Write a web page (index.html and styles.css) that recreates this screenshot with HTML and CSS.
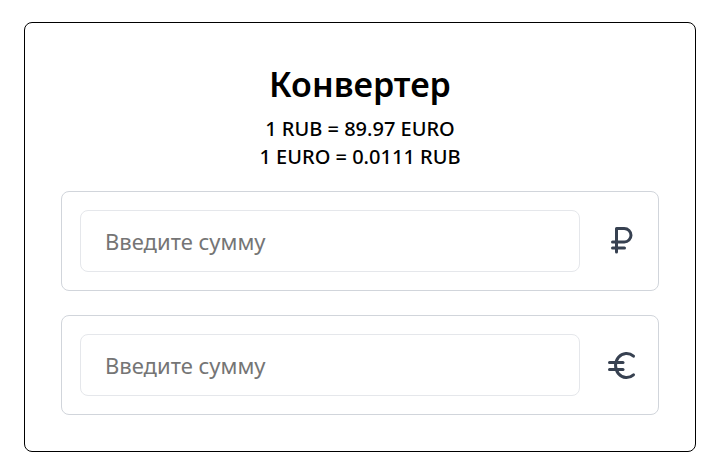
FILE: index.html
```html
<!DOCTYPE html>
<html lang="ru">
<head>
<meta charset="utf-8">
<link rel="stylesheet" href="styles.css">
</head>
<body>
<div class="card">
  <h1 class="title">Конвертер</h1>
  <div class="rates">
    <div class="rate">1 RUB = 89.97 EURO</div>
    <div class="rate">1 EURO = 0.0111 RUB</div>
  </div>
  <div class="field">
    <input class="input" type="text" placeholder="Введите сумму">
    <svg class="icon" viewBox="0 0 36 36" fill="none" stroke="currentColor" stroke-width="3" stroke-linecap="round" stroke-linejoin="round"><path d="M12.5 29V5.5H20.25A6.75 6.75 0 0 1 20.25 19H8.5"/><path d="M8.5 25H20.5"/></svg>
  </div>
  <div class="field">
    <input class="input" type="text" placeholder="Введите сумму">
    <svg class="icon" viewBox="0 0 36 36" fill="none" stroke="currentColor" stroke-width="3" stroke-linecap="round" stroke-linejoin="round"><path d="M29.5 9.2A11 12 0 1 0 29.5 27.8"/><path d="M5.5 15.5H19"/><path d="M5.5 22.5H19"/></svg>
  </div>
</div>
</body>
</html>
```
FILE: styles.css
```css
* { box-sizing: border-box; }
html, body { margin: 0; padding: 0; background: #fff; }
body {
  font-family: "Noto Sans", "Open Sans", sans-serif;
  color: #000;
  padding: 22px 32px 22px 24px;
}
.card {
  width: 672px;
  height: 430px;
  border: 1px solid #000;
  border-radius: 8px;
  padding: 36px;
  display: flex;
  flex-direction: column;
}
.title {
  margin: 0;
  text-align: center;
  font-size: 34px;
  font-weight: 600;
  line-height: 50px;
}
.rates {
  margin-top: 6px;
  text-align: center;
  font-size: 20px;
  font-weight: 500;
  line-height: 28px;
}
.field {
  display: flex;
  align-items: center;
  gap: 24px;
  margin-top: 20px;
  border: 1px solid #d1d5db;
  border-radius: 8px;
  padding: 18px;
}
.field + .field { margin-top: 24px; }
.input {
  flex: 1;
  height: 62px;
  border: 1px solid #e5e7eb;
  border-radius: 8px;
  padding: 0 24px;
  font-family: inherit;
  font-size: 22px;
  color: #111827;
  outline: none;
  min-width: 0;
}
.input::placeholder { color: #757575; }
.icon {
  width: 36px;
  height: 36px;
  color: #374151;
  flex: none;
}
```
